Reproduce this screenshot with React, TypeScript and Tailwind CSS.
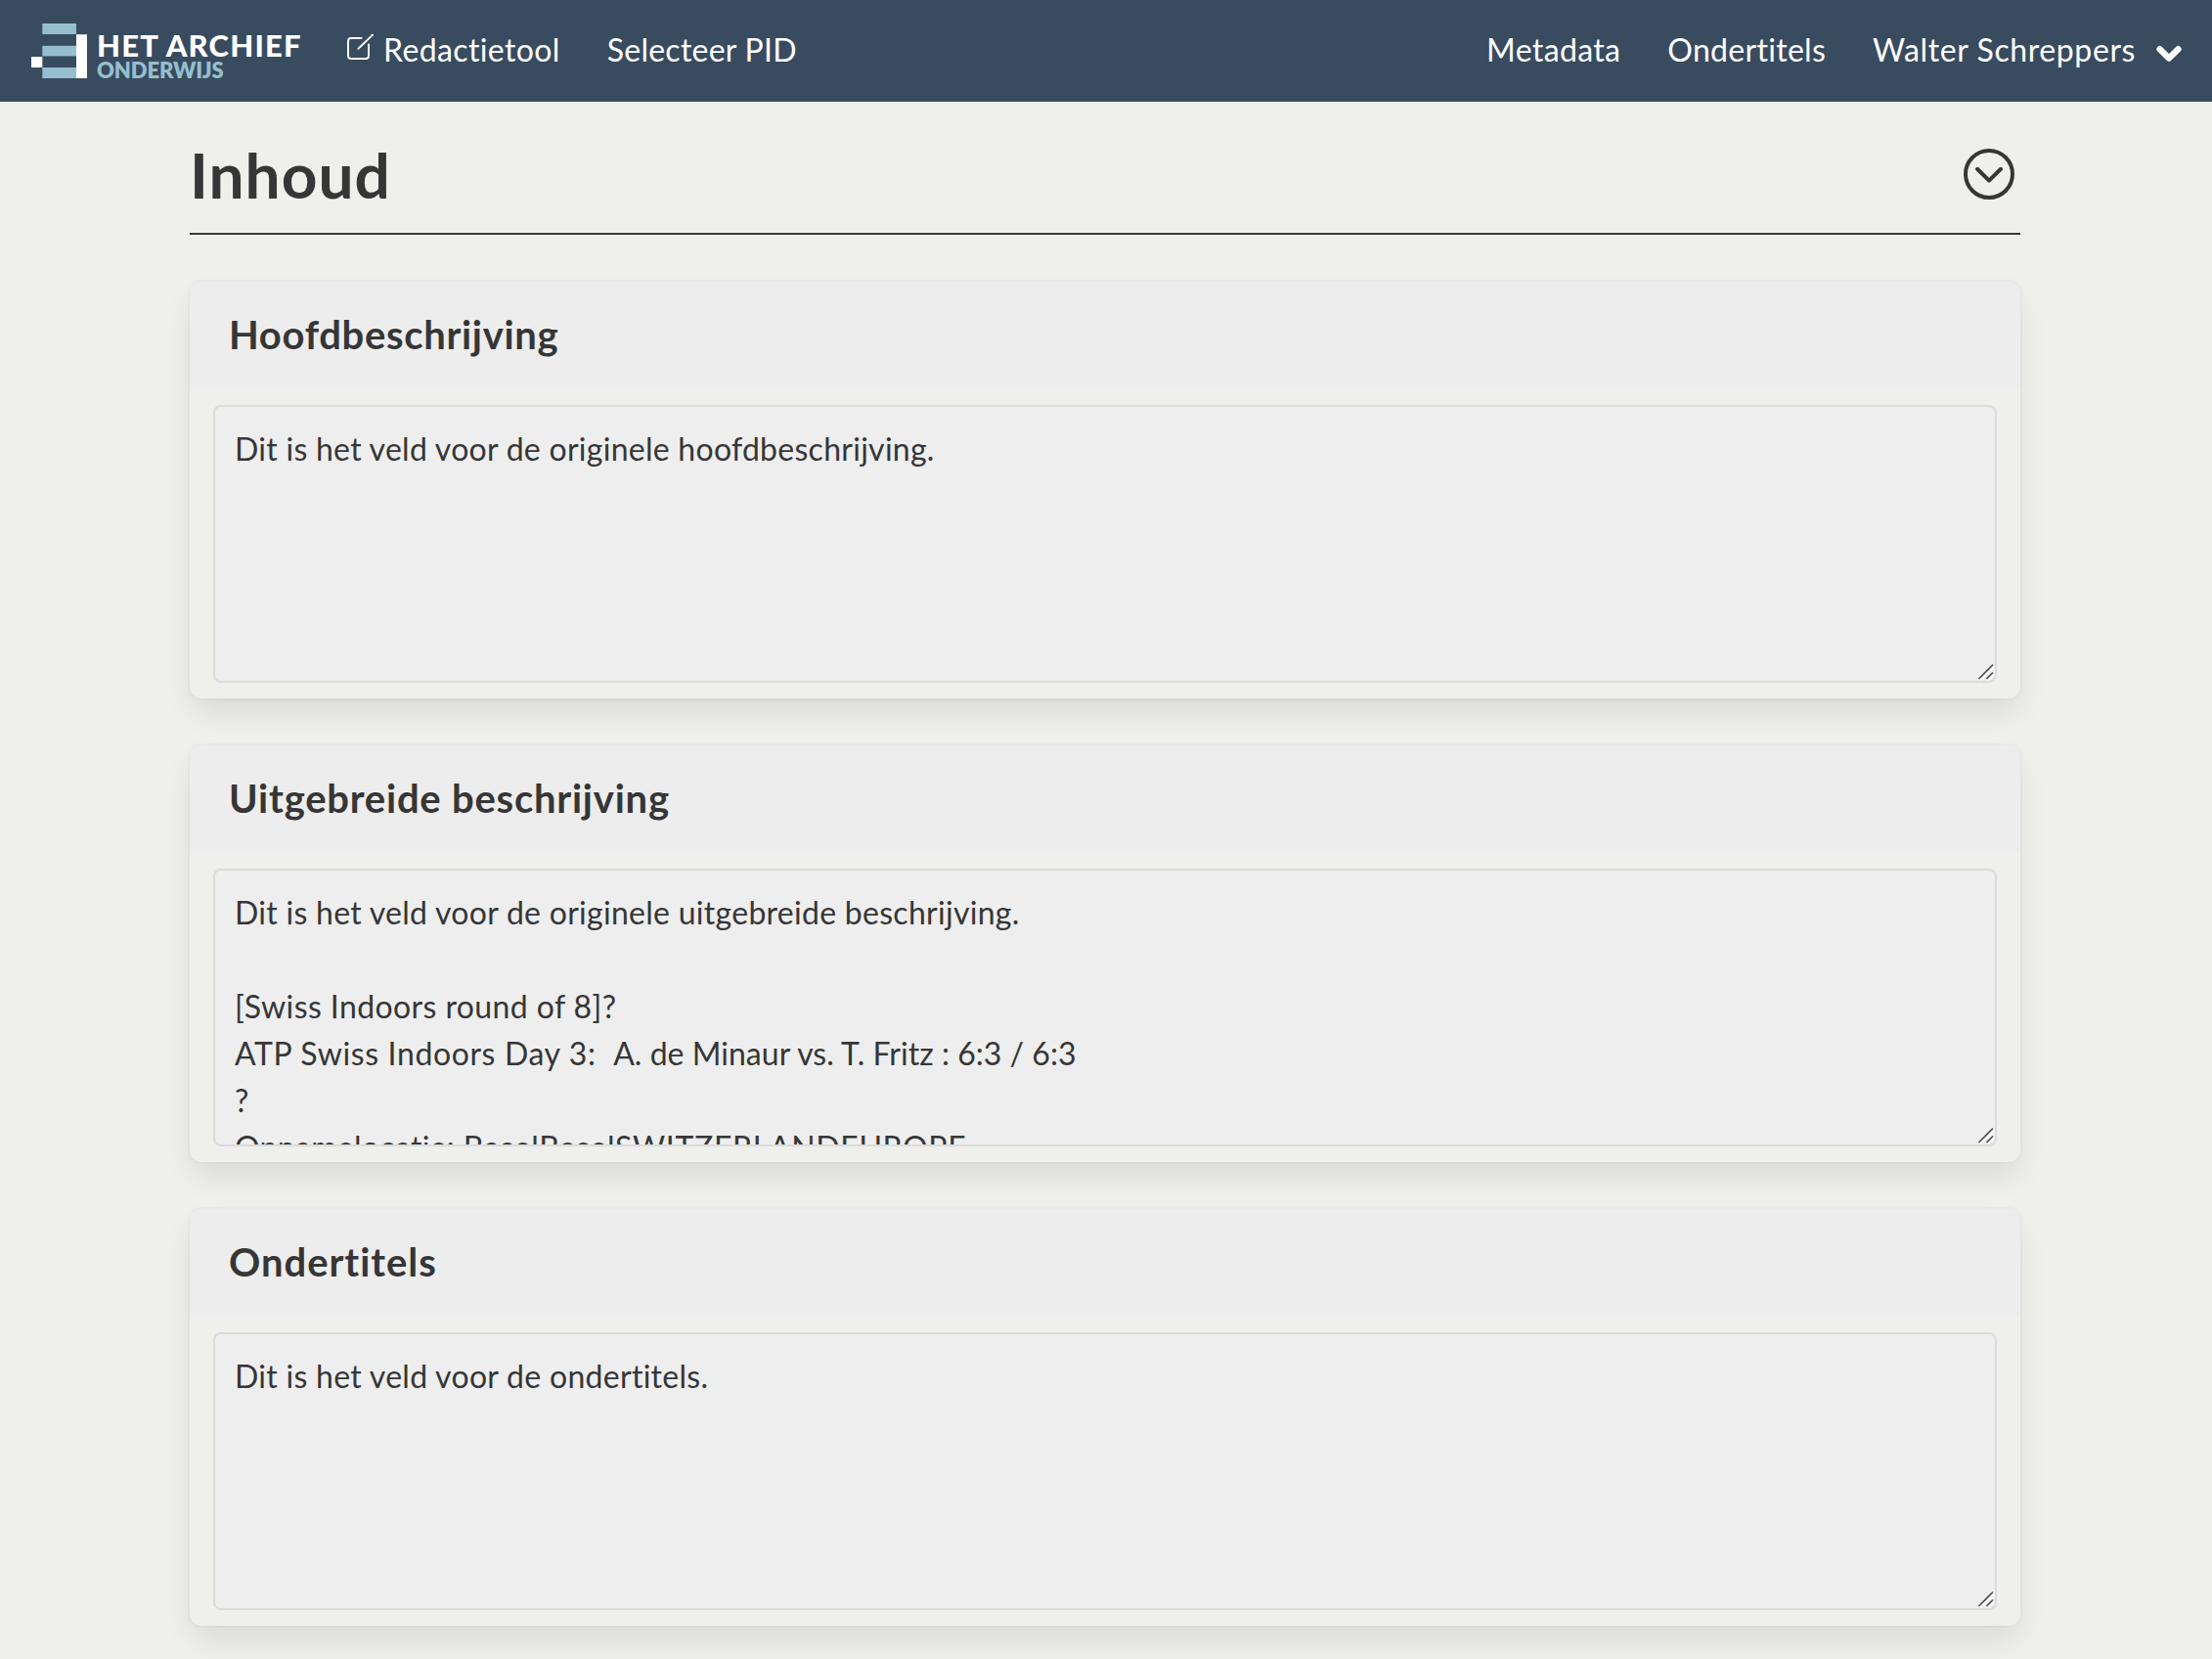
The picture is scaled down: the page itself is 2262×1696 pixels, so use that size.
import type { ReactNode } from "react";

function LogoMark() {
  return (
    <svg width="57" height="56" viewBox="0 0 57 56" shapeRendering="geometricPrecision">
      <g fill="#95bfcf">
        <rect x="11.3" y="0" width="34.7" height="11" />
        <rect x="11.3" y="22.8" width="34.7" height="10.6" />
        <rect x="11.3" y="45" width="34.7" height="11" />
      </g>
      <rect x="0" y="34" width="11.3" height="11" fill="#fff" />
      <rect x="46" y="11.2" width="11" height="44.8" fill="#fff" />
    </svg>
  );
}

function EditIcon() {
  return (
    <svg width="28" height="28" viewBox="0 0 28 28" fill="none" stroke="#fff" strokeWidth="1.9" strokeLinecap="round">
      <path d="M15.6 6H5Q2 6 2 9v15q0 3 3 3h15q3 0 3-3V12.4" />
      <path d="M12.4 16.8 25 4.6" />
      <path d="M26.6 3h.1" strokeWidth="2.6" />
    </svg>
  );
}

function ChevronIcon() {
  return (
    <svg width="26" height="18" viewBox="0 0 26 18" fill="none" stroke="#fff" strokeWidth="6.4" strokeLinecap="round" strokeLinejoin="round">
      <path d="m3.6 4.2 9.4 9.3 9.4-9.3" />
    </svg>
  );
}

function CircleChevronIcon() {
  return (
    <svg width="52" height="52" viewBox="0 0 52 52" fill="none" stroke="#363636" strokeWidth="4" strokeLinecap="round" strokeLinejoin="round">
      <circle cx="26" cy="26" r="24" />
      <path d="M14 20.8 26 32.6l12-11.8" />
    </svg>
  );
}

function ResizeHandle() {
  return (
    <svg className="absolute right-0 bottom-0" width="18" height="18" viewBox="0 0 18 18" fill="none">
      <path d="M3 17.5 17.5 3M11 17.5l6.5-6.5" stroke="#fff" strokeWidth="1.6" />
      <path d="M1.5 16 16 1.5M9.5 16 16 9.5" stroke="#4f4f4f" strokeWidth="1.6" />
    </svg>
  );
}

type Line = { text: ReactNode; tracking: string };

function Card({ title, tracking, lines }: { title: string; tracking: string; lines: Line[] }) {
  return (
    <section className="h-[426px] rounded-xl bg-[#eff0eb] shadow-[0_16px_32px_-4px_rgba(10,10,10,0.1),0_0_0_2px_rgba(10,10,10,0.02)]">
      <div className="flex h-[110px] items-center rounded-t-xl bg-[#ededed] px-10 pb-[3px]">
        <h2 className={`text-[40px] leading-[48px] font-bold ${tracking}`}>{title}</h2>
      </div>
      <div className="px-6 py-4">
        <div className="relative h-[284px] overflow-hidden rounded-lg border-2 border-[#dbdbdb] bg-[#eeeeee] px-5 py-[19px]">
          {lines.map((line, i) => (
            <p key={i} className={`h-12 text-[32px] leading-[48px] whitespace-pre ${line.tracking}`}>
              {line.text}
            </p>
          ))}
          <ResizeHandle />
        </div>
      </div>
    </section>
  );
}

function NavItem({ className, children }: { className: string; children: ReactNode }) {
  return <a className={`pt-[1px] text-[32px] leading-[48px] whitespace-nowrap ${className}`}>{children}</a>;
}

export default function App() {
  return (
    <div className="h-[1696px] overflow-hidden bg-[#eff0eb] font-['Lato','Noto_Sans',sans-serif] text-[#363636]">
      <header className="flex h-[104px] items-start bg-[#394b5f] px-8 text-white">
        <div className="flex w-[322px] items-start gap-[10px] pt-6">
          <LogoMark />
          <div className="pt-[9px] whitespace-nowrap">
            <div className="text-[31px] leading-[26px] font-black tracking-[1.2px]">HET ARCHIEF</div>
            <div className="text-[22px] leading-[26px] font-extrabold tracking-[-0.1px] text-[#95bfcf]">ONDERWIJS</div>
          </div>
        </div>
        <nav className="flex flex-1 items-start pt-[26px]">
          <div className="flex items-start gap-[10px]">
            <span className="pt-[7px]"><EditIcon /></span>
            <NavItem className="tracking-[0.38px]">Redactietool</NavItem>
          </div>
          <NavItem className="ml-12 tracking-[0.25px]">Selecteer PID</NavItem>
          <div className="ml-auto flex items-start gap-12">
            <NavItem className="tracking-[0.36px]">Metadata</NavItem>
            <NavItem className="tracking-[0.3px]">Ondertitels</NavItem>
            <div className="flex items-start gap-[21px]">
              <NavItem className="tracking-[0.6px]">Walter Schreppers</NavItem>
              <span className="-mr-[1px] pt-5"><ChevronIcon /></span>
            </div>
          </div>
        </nav>
      </header>
      <main className="mr-[196px] ml-[194px]">
        <div className="flex h-[136px] items-start justify-between border-b-2 border-[#363636] pt-[37px] pr-[6px]">
          <h1 className="pt-[2px] text-[64px] leading-[72px] font-bold tracking-[1px]">Inhoud</h1>
          <span className="pt-[11px]"><CircleChevronIcon /></span>
        </div>
        <div className="mt-12 flex flex-col gap-12">
          <Card
            title="Hoofdbeschrijving"
            tracking="tracking-[0.67px]"
            lines={[{ text: "Dit is het veld voor de originele hoofdbeschrijving.", tracking: "tracking-[0.27px]" }]}
          />
          <Card
            title="Uitgebreide beschrijving"
            tracking="tracking-[0.76px]"
            lines={[
              { text: "Dit is het veld voor de originele uitgebreide beschrijving.", tracking: "tracking-[0.28px]" },
              { text: "", tracking: "tracking-normal" },
              { text: "[Swiss Indoors round of 8]?", tracking: "tracking-[0.4px]" },
              {
                text: (
                  <>
                    <span className="tracking-[0.62px]">{"ATP Swiss Indoors Day 3:  "}</span>
                    {"A. de Minaur vs. T. Fritz : 6:3 / 6:3"}
                  </>
                ),
                tracking: "tracking-[0.03px]",
              },
              { text: "?", tracking: "tracking-normal" },
              {
                text: (
                  <>
                    <span className="tracking-[0.3px]">{"Opnamelocatie: "}</span>
                    {"BaselBaselSWITZERLANDEUROPE"}
                  </>
                ),
                tracking: "tracking-[0.66px]",
              },
            ]}
          />
          <Card
            title="Ondertitels"
            tracking="tracking-[0.97px]"
            lines={[{ text: "Dit is het veld voor de ondertitels.", tracking: "tracking-[0.29px]" }]}
          />
        </div>
      </main>
    </div>
  );
}
